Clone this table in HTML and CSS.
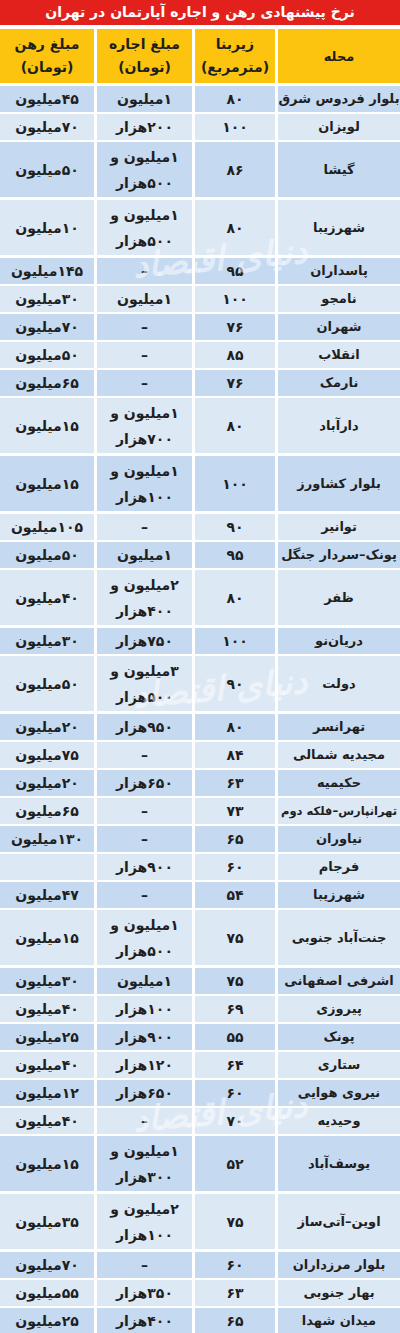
FILE: index.html
```html
<!DOCTYPE html>
<html lang="fa" dir="rtl">
<head>
<meta charset="utf-8">
<title>نرخ پیشنهادی رهن و اجاره آپارتمان در تهران</title>
<link rel="stylesheet" href="styles.css">
</head>
<body>
<div class="sheet">
  <div class="title">نرخ پیشنهادی رهن و اجاره آپارتمان در تهران</div>
  <div class="row head">
    <div class="cell">محله</div>
    <div class="cell">زیربنا<br>(مترمربع)</div>
    <div class="cell">مبلغ اجاره<br>(تومان)</div>
    <div class="cell">مبلغ رهن<br>(تومان)</div>
  </div>
  <div class="row dark"><div class="cell">بلوار فردوس شرق</div><div class="cell">۸۰</div><div class="cell">۱میلیون</div><div class="cell">۴۵میلیون</div></div>
  <div class="row light"><div class="cell">لویزان</div><div class="cell">۱۰۰</div><div class="cell">۲۰۰هزار</div><div class="cell">۷۰میلیون</div></div>
  <div class="row dark tall"><div class="cell">گیشا</div><div class="cell">۸۶</div><div class="cell">۱میلیون و<br>۵۰۰هزار</div><div class="cell">۵۰میلیون</div></div>
  <div class="row light tall"><div class="cell">شهرزیبا</div><div class="cell">۸۰</div><div class="cell">۱میلیون و<br>۵۰۰هزار</div><div class="cell">۱۰میلیون</div></div>
  <div class="row dark"><div class="cell">پاسداران</div><div class="cell">۹۵</div><div class="cell">–</div><div class="cell">۱۴۵میلیون</div></div>
  <div class="row light"><div class="cell">نامجو</div><div class="cell">۱۰۰</div><div class="cell">۱میلیون</div><div class="cell">۳۰میلیون</div></div>
  <div class="row dark"><div class="cell">شهران</div><div class="cell">۷۶</div><div class="cell">–</div><div class="cell">۷۰میلیون</div></div>
  <div class="row light"><div class="cell">انقلاب</div><div class="cell">۸۵</div><div class="cell">–</div><div class="cell">۵۰میلیون</div></div>
  <div class="row dark"><div class="cell">نارمک</div><div class="cell">۷۶</div><div class="cell">–</div><div class="cell">۶۵میلیون</div></div>
  <div class="row light tall"><div class="cell">دارآباد</div><div class="cell">۸۰</div><div class="cell">۱میلیون و<br>۷۰۰هزار</div><div class="cell">۱۵میلیون</div></div>
  <div class="row dark tall"><div class="cell">بلوار کشاورز</div><div class="cell">۱۰۰</div><div class="cell">۱میلیون و<br>۱۰۰هزار</div><div class="cell">۱۵میلیون</div></div>
  <div class="row light"><div class="cell">توانیر</div><div class="cell">۹۰</div><div class="cell">–</div><div class="cell">۱۰۵میلیون</div></div>
  <div class="row dark"><div class="cell">پونک–سردار جنگل</div><div class="cell">۹۵</div><div class="cell">۱میلیون</div><div class="cell">۵۰میلیون</div></div>
  <div class="row light tall"><div class="cell">ظفر</div><div class="cell">۸۰</div><div class="cell">۲میلیون و<br>۴۰۰هزار</div><div class="cell">۴۰میلیون</div></div>
  <div class="row dark"><div class="cell">دریان‌نو</div><div class="cell">۱۰۰</div><div class="cell">۷۵۰هزار</div><div class="cell">۳۰میلیون</div></div>
  <div class="row light tall"><div class="cell">دولت</div><div class="cell">۹۰</div><div class="cell">۳میلیون و<br>۵۰۰هزار</div><div class="cell">۵۰میلیون</div></div>
  <div class="row dark"><div class="cell">تهرانسر</div><div class="cell">۸۰</div><div class="cell">۹۵۰هزار</div><div class="cell">۲۰میلیون</div></div>
  <div class="row light"><div class="cell">مجیدیه شمالی</div><div class="cell">۸۴</div><div class="cell">–</div><div class="cell">۷۵میلیون</div></div>
  <div class="row dark"><div class="cell">حکیمیه</div><div class="cell">۶۳</div><div class="cell">۶۵۰هزار</div><div class="cell">۲۰میلیون</div></div>
  <div class="row light"><div class="cell long">تهرانپارس–فلکه دوم</div><div class="cell">۷۳</div><div class="cell">–</div><div class="cell">۶۵میلیون</div></div>
  <div class="row dark"><div class="cell">نیاوران</div><div class="cell">۶۵</div><div class="cell">–</div><div class="cell">۱۳۰میلیون</div></div>
  <div class="row light"><div class="cell">فرجام</div><div class="cell">۶۰</div><div class="cell">۹۰۰هزار</div><div class="cell"></div></div>
  <div class="row dark"><div class="cell">شهرزیبا</div><div class="cell">۵۴</div><div class="cell">–</div><div class="cell">۴۷میلیون</div></div>
  <div class="row light tall"><div class="cell">جنت‌آباد جنوبی</div><div class="cell">۷۵</div><div class="cell">۱میلیون و<br>۵۰۰هزار</div><div class="cell">۱۵میلیون</div></div>
  <div class="row dark"><div class="cell">اشرفی اصفهانی</div><div class="cell">۷۵</div><div class="cell">۱میلیون</div><div class="cell">۳۰میلیون</div></div>
  <div class="row light"><div class="cell">پیروزی</div><div class="cell">۶۹</div><div class="cell">۱۰۰هزار</div><div class="cell">۴۰میلیون</div></div>
  <div class="row dark"><div class="cell">پونک</div><div class="cell">۵۵</div><div class="cell">۹۰۰هزار</div><div class="cell">۲۵میلیون</div></div>
  <div class="row light"><div class="cell">ستاری</div><div class="cell">۶۴</div><div class="cell">۱۲۰هزار</div><div class="cell">۴۰میلیون</div></div>
  <div class="row dark"><div class="cell">نیروی هوایی</div><div class="cell">۶۰</div><div class="cell">۶۵۰هزار</div><div class="cell">۱۲میلیون</div></div>
  <div class="row light"><div class="cell">وحیدیه</div><div class="cell">۷۰</div><div class="cell">–</div><div class="cell">۴۰میلیون</div></div>
  <div class="row dark tall"><div class="cell">یوسف‌آباد</div><div class="cell">۵۲</div><div class="cell">۱میلیون و<br>۳۰۰هزار</div><div class="cell">۱۵میلیون</div></div>
  <div class="row light tall"><div class="cell">اوین–آتی‌ساز</div><div class="cell">۷۵</div><div class="cell">۲میلیون و<br>۱۰۰هزار</div><div class="cell">۳۵میلیون</div></div>
  <div class="row dark"><div class="cell">بلوار مرزداران</div><div class="cell">۶۰</div><div class="cell">–</div><div class="cell">۷۰میلیون</div></div>
  <div class="row light"><div class="cell">بهار جنوبی</div><div class="cell">۶۳</div><div class="cell">۳۵۰هزار</div><div class="cell">۵۵میلیون</div></div>
  <div class="row dark"><div class="cell">میدان شهدا</div><div class="cell">۶۵</div><div class="cell">۴۰۰هزار</div><div class="cell">۲۵میلیون</div></div>

  <div class="watermark wm1">دنیای اقتصاد</div>
  <div class="watermark wm2">دنیای اقتصاد</div>
  <div class="watermark wm3">دنیای اقتصاد</div>
</div>
</body>
</html>
```

FILE: styles.css
```css
html, body {
  margin: 0;
  padding: 0;
  background: #ffffff;
}

body {
  font-family: "DejaVu Sans", sans-serif;
  color: #1f1f1f;
}

.sheet {
  position: relative;
  width: 400px;
  display: flex;
  flex-direction: column;
  gap: 3px;
  overflow: hidden;
}

.title {
  height: 25px;
  margin-bottom: 1px;
  background: #e3211c;
  color: #ffffff;
  font-size: 14px;
  font-weight: bold;
  line-height: 25px;
  text-align: center;
}

.row {
  display: grid;
  grid-template-columns: 122px 80px 95px 94px;
  column-gap: 3px;
  height: 25px;
}

.row.tall {
  height: 55px;
}

.row.head {
  height: 54px;
}

.cell {
  display: flex;
  align-items: center;
  justify-content: center;
  text-align: center;
  font-size: 14px;
  font-weight: bold;
  line-height: 26px;
  white-space: nowrap;
}

.row .cell:first-child {
  font-size: 13px;
}

.row .cell.long {
  font-size: 11.5px;
}

.head .cell {
  background: #fcc40f;
  line-height: 23px;
}

.dark .cell {
  background: #c5daf1;
}

.light .cell {
  background: #dde8f5;
}

.watermark {
  position: absolute;
  left: 100px;
  width: 240px;
  text-align: center;
  white-space: nowrap;
  font-size: 34px;
  font-weight: bold;
  font-style: italic;
  color: rgba(255, 255, 255, 0.5);
  transform: rotate(-5deg);
  pointer-events: none;
}

.wm1 { top: 238px; }
.wm2 { top: 668px; }
.wm3 { top: 1092px; }
```
